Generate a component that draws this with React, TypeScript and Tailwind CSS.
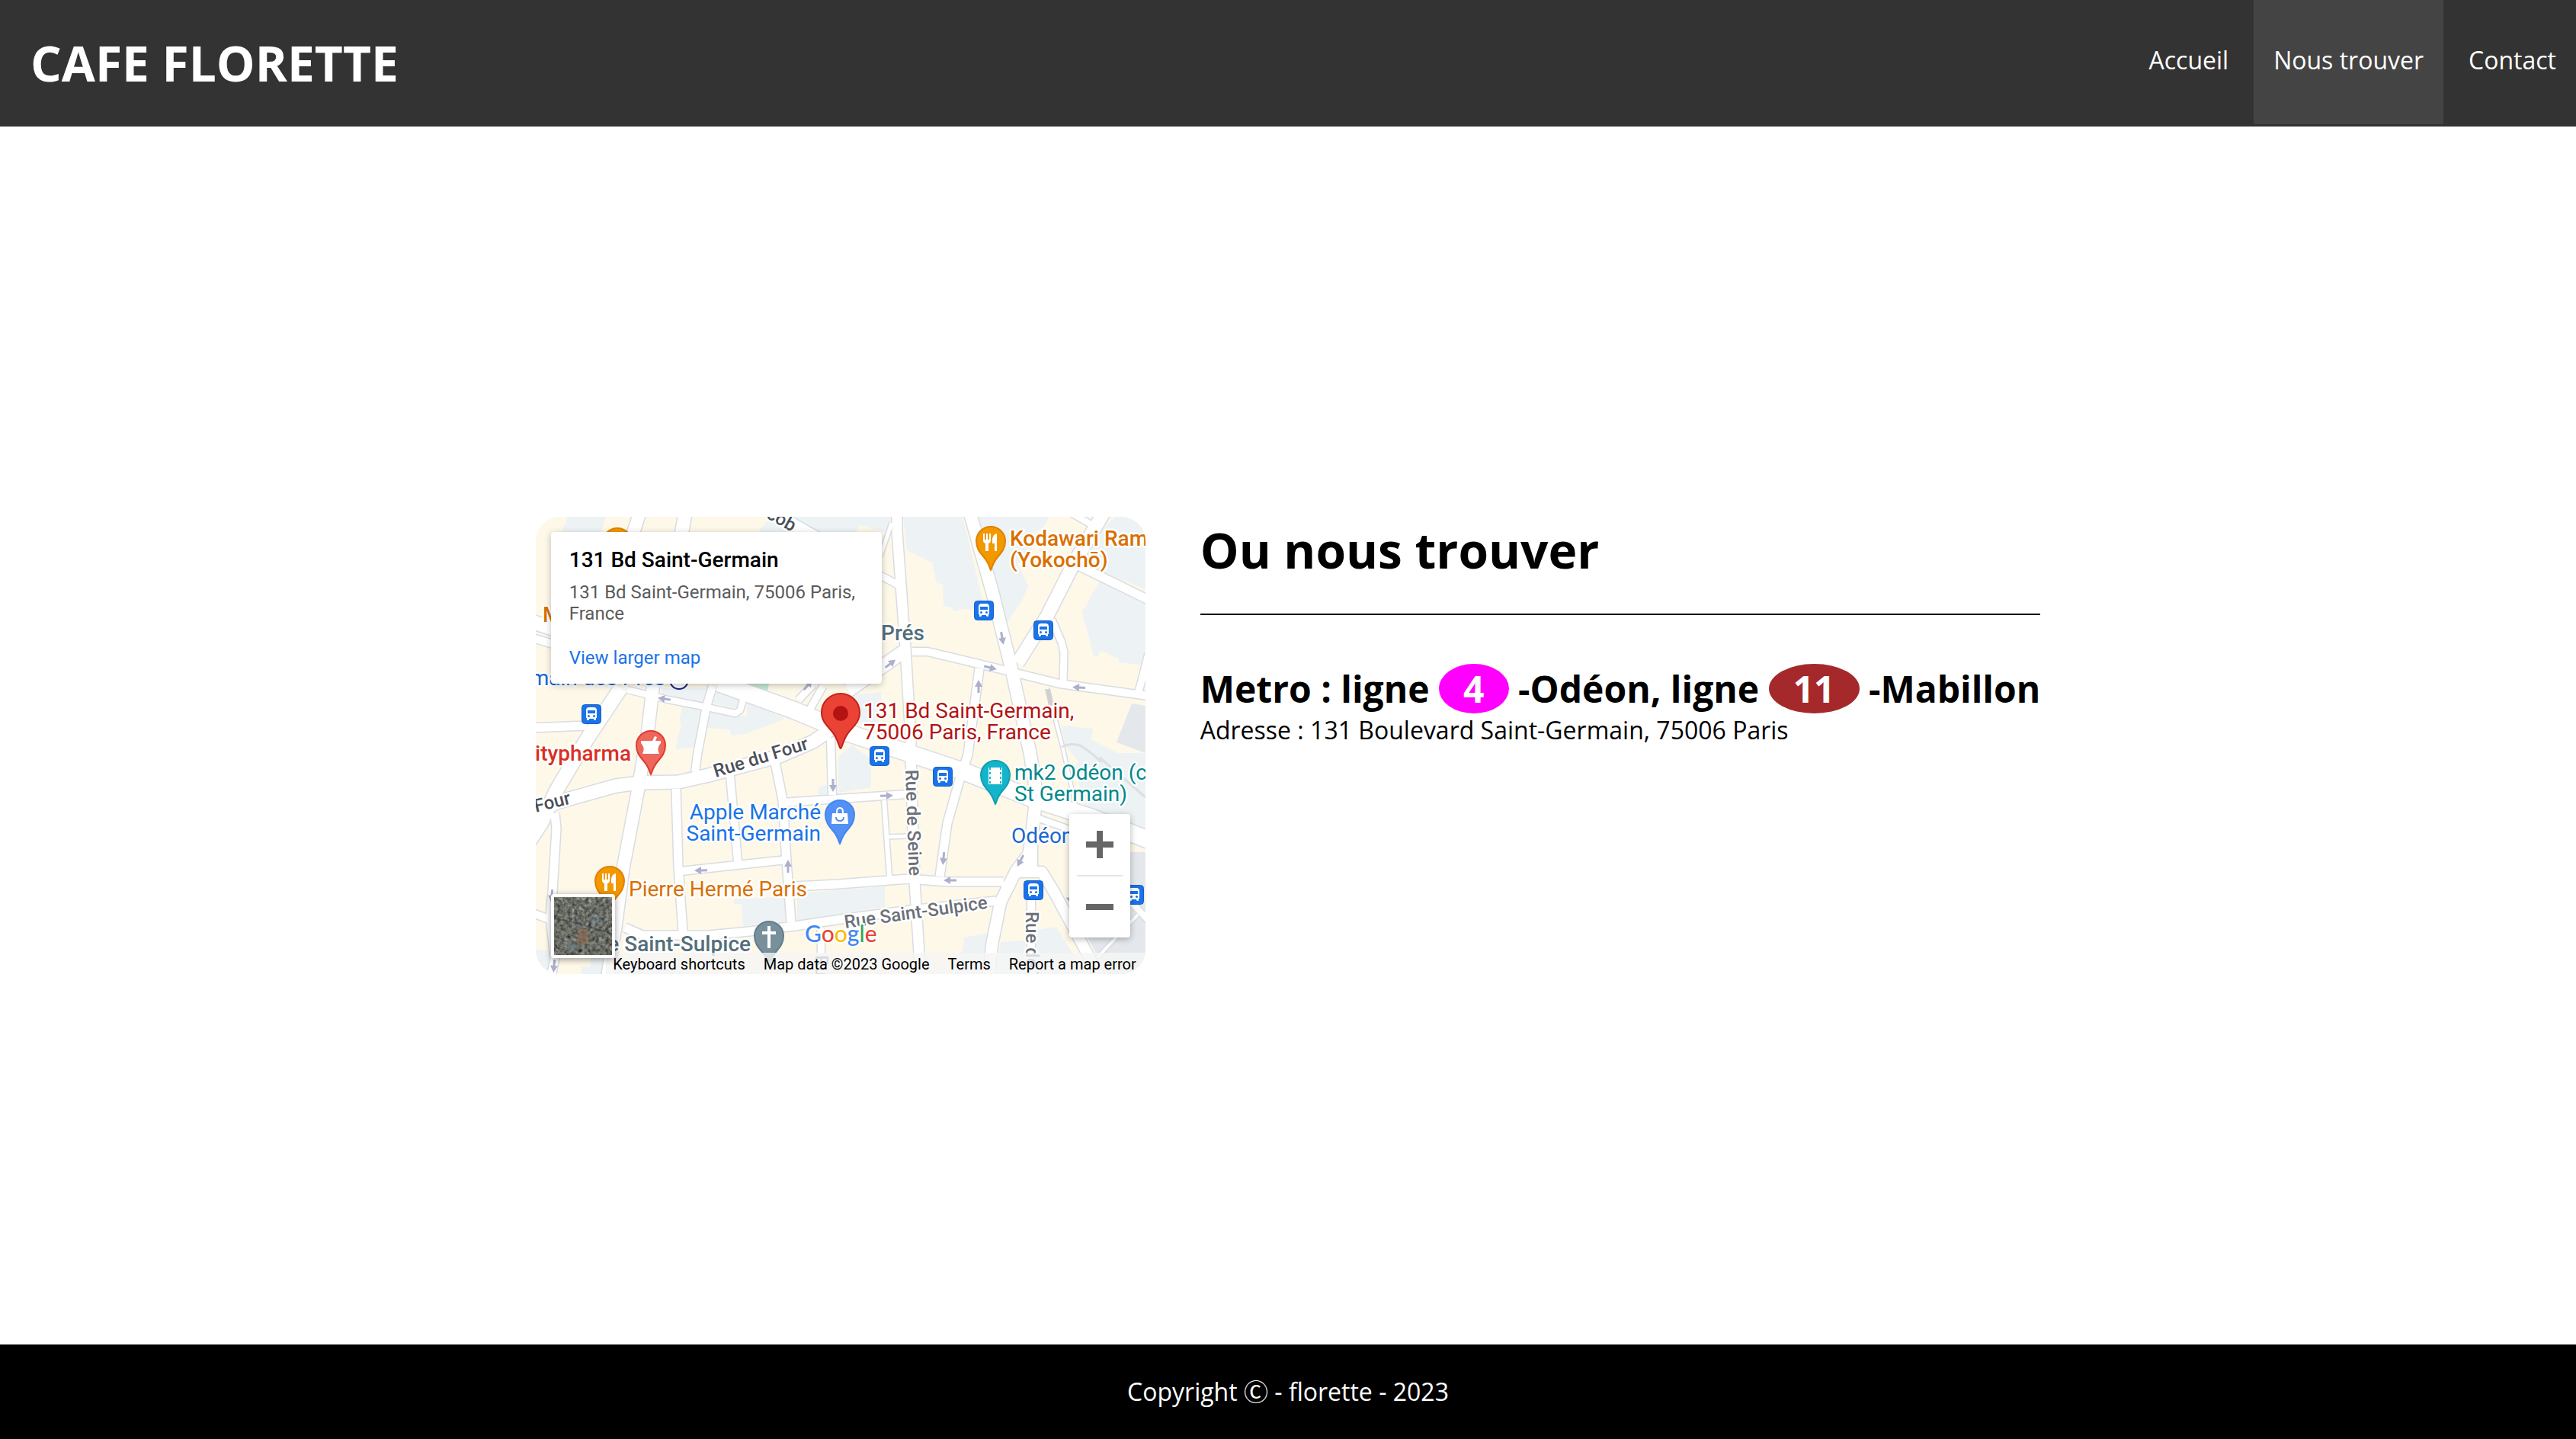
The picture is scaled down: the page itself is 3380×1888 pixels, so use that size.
import React from "react";

type Road = [string, number];

const ROADS: Road[] = [
  ["136,-4 127,24 154,222 147,282 134,359 115,459 104,542 94,604", 16],
  ["196,-4 188,40", 17],
  ["300,-12 354,20 430,60", 16],
  ["112,224 67,292 27,359 7,402 -8,425", 18],
  ["-4,277 67,274", 11],
  ["-4,138 26,148", 18],
  ["-4,159 26,168", 10],
  ["120,227 174,240 220,249 262,258 268,254 272,240", 8],
  ["232,222 224,249 212,312 209,335", 10],
  ["345,240 364,220", 9],
  ["360,252 377,222", 9],
  ["-4,390 30,374 105,353 137,349 187,348 227,339 320,314 364,295 392,276", 17],
  ["25,389 27,409 22,492 19,525 25,579 20,604", 11],
  ["-4,520 20,529", 10],
  ["184,357 187,459 193,545", 11],
  ["255,339 265,452", 10],
  ["314,322 324,372 329,452 335,532", 11],
  ["190,465 264,457 329,450", 10],
  ["324,375 397,370 487,364", 10],
  ["340,485 397,482 490,475 540,479 614,479", 11],
  ["117,539 140,549 227,549 280,544 340,537 407,527 500,515 604,504", 11],
  ["387,290 389,365", 10],
  ["474,-4 474,19 485,172 492,292 492,319 497,479 505,604", 13],
  ["467,8 452,52", 5],
  ["450,76 475,89", 9],
  ["570,-4 600,102 624,199 649,312 657,365 650,425 650,466", 16],
  ["747,-8 707,59 670,132 632,192", 17],
  ["494,177 514,177 610,200 687,219 804,235", 10],
  ["410,228 485,175", 17],
  ["582,199 567,312 557,342 540,402 530,472", 11],
  ["677,135 690,165 693,178 692,216", 9],
  ["704,-4 732,12", 8],
  ["714,65 804,109", 11],
  ["804,180 791,230", 9],
  ["457,372 464,472", 6],
  ["460,420 487,419", 5],
  ["654,398 647,442 630,465 610,505 599,559 594,604", 15],
  ["634,466 664,466 680,492 730,585 740,604", 14],
  ["655,394 700,410 740,424", 8],
  ["650,490 650,604", 10],
  ["776,500 804,530", 8],
  ["790,522 737,578", 4],
  ["374,540 375,604", 9],
  ["671,225 692,305 708,378", 4],
];

const BOULEVARD: Road[] = [["240,218 339,254 414,285 564,335 650,369 730,395 804,424", 22]];

const BLOCKS = [
  "42,0 92,0 85,20 34,20",
  "292,20 309,0 470,0 466,22 425,11 420,20",
  "482,0 560,0 587,112 579,122 557,121 554,124 547,123 546,119 535,117 534,89 526,87 524,79 520,60 487,44",
  "580,0 674,0 666,14 655,20 650,46 632,62 646,90 640,106 617,142 607,115",
  "740,84 800,112 800,195 766,191 764,186 740,175 738,184 732,182 717,125",
  "760,0 800,0 800,95 717,63 735,25",
  "165,225 227,225 220,247 165,236",
  "234,229 267,239 264,252 230,244",
  "192,249 220,252 210,302 184,305 186,290 191,275 189,265",
  "230,255 277,262 277,242 327,265 274,285 257,287 254,279 225,277",
  "400,235 454,230 450,272 410,270",
  "397,315 415,300 440,318 440,355 397,362",
  "343,494 458,485 458,512 343,530",
  "260,502 330,498 333,530 272,537 270,508 260,508",
  "562,552 595,546 588,600 550,600 552,590 561,564",
  "610,558 642,556 642,600 604,600",
  "657,542 683,538 720,600 657,600",
  "690,274 732,278 728,292 764,310 800,310 800,410 720,380 708,330 712,320 694,300",
  "0,568 20,570 22,600 0,600",
  "72,570 92,552 92,600 72,600",
  "370,355 388,350 386,366 372,368",
  "60,590 200,590 200,600 60,600",
];

const DARK_BLOCKS = ["782,245 800,248 800,310 762,296", "700,508 780,440 800,440 800,600 750,600"];

const ARROWS: [number, number, number][] = [
  [169, 239, 188], [357, 221, -50], [465, 193, -38], [612, 159, 80], [596, 198, 14],
  [581, 223, -90], [713, 224, 183], [390, 352, 90], [217, 464, 178], [331, 459, -90],
  [21, 497, 95], [24, 589, 95], [460, 366, -2], [535, 448, 95], [544, 477, 180],
  [636, 451, 118], [704, 503, 200],
];

const STOPS: [number, number][] = [
  [60, 246], [575, 110], [653, 136], [438, 301], [521, 328], [640, 477], [772, 483],
];

function Pin({ x, y, fill, stroke, children }: { x: number; y: number; fill: string; stroke: string; children?: React.ReactNode }) {
  return (
    <g transform={`translate(${x} ${y})`}>
      <path
        d="M0 38C-1 37-2 29-9 21C-15 14-19 9-19 0A19 19 0 1 1 19 0C19 9 15 14 9 21C2 29 1 37 0 38Z"
        fill={fill}
        stroke={stroke}
        strokeWidth={2}
      />
      {children}
    </g>
  );
}

function Cutlery() {
  return (
    <g fill="#fff">
      <path d="M-10-10h2v8h2v-8h2v8h2v-8h2v9q0 3-3 4v10h-4V3q-3-1-3-4z" />
      <path d="M8-10v23H5V3H2V-3Q3-9 8-10z" />
    </g>
  );
}

function BusStop({ x, y }: { x: number; y: number }) {
  return (
    <g transform={`translate(${x} ${y})`}>
      <rect x="0.5" y="0.5" width="25" height="25" rx="4" fill="#1a73e8" stroke="#1560cc" />
      <path d="M6 8q0-4 4-4h6q4 0 4 4v10h-1v2q0 1-1 1t-2-1v-1H10v1q0 1-2 1t-1-1v-2H6z" fill="#fff" />
      <rect x="8" y="8" width="10" height="4" fill="#1a73e8" />
      <circle cx="9.500" cy="15.500" r="1.500" fill="#1a73e8" />
      <circle cx="16.500" cy="15.500" r="1.500" fill="#1a73e8" />
    </g>
  );
}

function MapDrawing() {
  const all: Road[] = [...ROADS, ...BOULEVARD];
  return (
    <svg viewBox="0 0 800 600" className="absolute inset-0 size-full font-['Roboto',sans-serif]" role="img" aria-label="Plan du quartier Saint-Germain">
      <rect width="800" height="600" fill="#fef8e8" />
      {BLOCKS.map((p) => <polygon key={p} points={p} fill="#edf2f4" />)}
      {DARK_BLOCKS.map((p) => <polygon key={p} points={p} fill="#e4e8ec" />)}
      <polygon points="277,218 306,218 304,230" fill="#c5e8cf" />
      <g fill="none" strokeLinejoin="round">
        {all.map(([p, w]) => <polyline key={p} points={p} stroke="#d9dce2" strokeWidth={w + 3} />)}
        {all.map(([p, w]) => <polyline key={p} points={p} stroke="#fff" strokeWidth={w} />)}
      </g>
      <path d="M690 302q12-6 24-2q14 8 28 22M740 316l60 52" fill="none" stroke="#dcdfe4" strokeWidth="3" />
      <path d="M672 226l4 22" stroke="#d0d0d0" strokeWidth="6" />
      {ARROWS.map(([x, y, a]) => (
        <path key={`${x}-${y}`} d="M-8-1.500H0V-5L9 0L0 5V1.500H-8z" fill="#acb0cd" transform={`translate(${x} ${y}) rotate(${a})`} />
      ))}

      <g stroke="#fff" strokeWidth="5" strokeLinejoin="round" paintOrder="stroke" fontSize="28">
        <g fontSize="24" fontWeight="500" fill="#4b5058">
          <text transform="translate(336 20) rotate(29)" textAnchor="end">cob</text>
          <text transform="translate(236 342) rotate(-17)">Rue du Four</text>
          <text transform="translate(0 388) rotate(-14)">Four</text>
        </g>
        <g fontSize="24" fontWeight="500" fill="#6c7078">
          <text transform="translate(485 332) rotate(88)">Rue de Seine</text>
          <text transform="translate(406 540) rotate(-8)">Rue Saint-Sulpice</text>
          <text transform="translate(643 518) rotate(90)">Rue de T</text>
          <text transform="translate(367 575) rotate(90)">Ru</text>
        </g>
        <text x="9" y="138" fontWeight="500" fill="#d96f00">M</text>
        <g fontWeight="500" fill="#d96f00">
          <text x="622" y="38">Kodawari Ram</text>
          <text x="622" y="66">(Yokochō)</text>
        </g>
        <text x="122" y="498" fill="#d96f00">Pierre Hermé Paris</text>
        <g fill="#b31412">
          <text x="430" y="264">131 Bd Saint-Germain,</text>
          <text x="430" y="292">75006 Paris, France</text>
        </g>
        <text x="125" y="320" textAnchor="end" fontWeight="500" fill="#d93025">itypharma</text>
        <text x="170" y="221" textAnchor="end" fill="#1967d2">main des Prés</text>
        <text x="624" y="428" fill="#1967d2">Odéon</text>
        <g fill="#1a73e8" textAnchor="end">
          <text x="374" y="397">Apple Marché</text>
          <text x="374" y="425">Saint-Germain</text>
        </g>
        <g fill="#00898c">
          <text x="628" y="345">mk2 Odéon (c</text>
          <text x="628" y="373">St Germain)</text>
        </g>
        <g fontWeight="500" fill="#546e7a">
          <text x="510" y="162" textAnchor="end">Prés</text>
          <text x="282" y="570" textAnchor="end">e Saint-Sulpice</text>
        </g>
      </g>

      <circle cx="188" cy="214" r="12" fill="#fff" stroke="#1a237e" strokeWidth="2" />
      {STOPS.map(([x, y]) => <BusStop key={`${x}-${y}`} x={x} y={y} />)}

      <Pin x={107} y={34} fill="#f29900" stroke="#e28000" />
      <Pin x={597} y={32} fill="#f29900" stroke="#e28000"><Cutlery /></Pin>
      <Pin x={97} y={478} fill="#f29900" stroke="#e28000"><Cutlery /></Pin>
      <Pin x={151} y={300} fill="#ee675c" stroke="#e03a30">
        <path d="M-13-6H2l3-6 3 1-2 5h7v3q-6 6-2 14H-11Q-7 3-13-3z" fill="#fff" />
      </Pin>
      <Pin x={399} y={391} fill="#5491f5" stroke="#4285f4">
        <path d="M-10-2H10L11 12H-11z" fill="#fff" />
        <path d="M-4-1v-3q0-5 4-5t4 5v3" fill="none" stroke="#fff" strokeWidth="2" />
        <path d="M-5 3q0 5 5 5t5-5" fill="none" stroke="#5491f5" strokeWidth="2" />
      </Pin>
      <Pin x={603} y={339} fill="#12b5cb" stroke="#129eaf">
        <path d="M-9-10H9V12H-9z" fill="#fff" />
        <path d="M-7-10V12M7-10V12" stroke="#12b5cb" strokeWidth="2" strokeDasharray="3 3" />
      </Pin>
      <Pin x={306} y={550} fill="#78909c" stroke="#607d8b">
        <path d="M-2-13H2V-6H9V-2H2V16H-2V-2H-9V-6H-2z" fill="#fff" />
      </Pin>
      <path
        d="M400 304C398 304 397 291 388 281C380 272 375 267 375 257A25 25 0 1 1 425 257C425 267 420 272 412 281C403 291 402 304 400 304Z"
        fill="#ea4335"
        stroke="#c5221f"
        strokeWidth="2"
      />
      <circle cx="400" cy="258" r="10" fill="#b31412" />

      <text x="353" y="558" fontSize="30" className="font-['Lato',sans-serif]" fontWeight="500" stroke="#fff" strokeWidth="4" paintOrder="stroke">
        <tspan fill="#4285f4">G</tspan>
        <tspan fill="#ea4335">o</tspan>
        <tspan fill="#fbbc04">o</tspan>
        <tspan fill="#4285f4">g</tspan>
        <tspan fill="#34a853">l</tspan>
        <tspan fill="#ea4335">e</tspan>
      </text>
    </svg>
  );
}

function SatelliteThumb() {
  return (
    <svg viewBox="0 0 76 76" className="size-full">
      <filter id="grain" x="0" y="0" width="100%" height="100%" colorInterpolationFilters="sRGB">
        <feTurbulence type="fractalNoise" baseFrequency="0.22" numOctaves="4" seed="7" />
        <feColorMatrix values="0.500 0.400 0 0 -0.040  0.500 0.400 0 0 -0.030  0.500 0.400 0 0 -0.060  0 0 0 0 1" />
      </filter>
      <rect width="76" height="76" fill="#62635c" />
      <rect width="76" height="76" filter="url(#grain)" />
      <path d="M22 32l10-2 4 8-10 4zM48 26l14-2 2 12-16 2zM16 58l10-2 6 12-12 6z" fill="#6b7a86" opacity="0.400" />
      <path d="M31 42h14v20H31z" fill="#95694f" opacity="0.500" />
      <path d="M0 28l30 6 46 14" stroke="#2b302d" strokeWidth="2" fill="none" opacity="0.400" />
    </svg>
  );
}

function MapFrame() {
  return (
    <section aria-label="Carte" className="relative h-[600px] w-[800px] shrink-0 overflow-hidden rounded-[32px] font-['Roboto',sans-serif]">
      <MapDrawing />
      <div className="absolute top-5 left-5 h-[199px] w-[434px] rounded-sm bg-white px-6 pt-[17px] shadow-[0_2px_8px_rgba(0,0,0,0.25)]">
        <h2 className="text-[28px] leading-[40px] font-medium text-black">131 Bd Saint-Germain</h2>
        <p className="mt-2 text-[24px] leading-[28px] text-[#5b5b5b]">131 Bd Saint-Germain, 75006 Paris, France</p>
        <a href="#carte" className="mt-[30px] block text-[24px] leading-[28px] text-[#1a73e8]">View larger map</a>
      </div>
      <div className="absolute right-5 bottom-12 flex w-20 flex-col items-center rounded-sm bg-white shadow-[0_2px_8px_rgba(0,0,0,0.3)]">
        <button type="button" aria-label="Zoom in" className="flex h-20 w-full items-center justify-center">
          <svg viewBox="0 0 36 36" className="size-9" fill="#666"><path d="M14 0h8v14h14v8H22v14h-8V22H0v-8h14z" /></svg>
        </button>
        <div className="h-[2px] w-[60px] bg-[#e6e6e6]" />
        <button type="button" aria-label="Zoom out" className="flex h-20 w-full items-center justify-center">
          <svg viewBox="0 0 36 36" className="size-9" fill="#666"><path d="M0 14h36v8H0z" /></svg>
        </button>
      </div>
      <div className="absolute right-0 bottom-0 flex h-7 w-[708px] items-center justify-end gap-6 bg-[#f5f5f5]/80 pt-[2px] pr-3 text-[20px] leading-[28px] whitespace-nowrap text-black">
        <button type="button">Keyboard shortcuts</button>
        <span>Map data ©2023 Google</span>
        <a href="#terms">Terms</a>
        <a href="#report">Report a map error</a>
      </div>
      <button type="button" aria-label="Show satellite imagery" className="absolute bottom-[21px] left-5 size-[84px] rounded-sm border-4 border-white bg-white shadow-[0_2px_8px_rgba(0,0,0,0.4)]">
        <SatelliteThumb />
      </button>
    </section>
  );
}

const NAV = [
  { label: "Accueil", active: false },
  { label: "Nous trouver", active: true },
  { label: "Contact", active: false },
];

export default function App() {
  return (
    <div className="flex min-h-screen flex-col bg-white font-['Open_Sans',sans-serif] text-[32px] leading-[44px] text-black">
      <header className="flex items-start justify-between bg-[#333] text-white">
        <div className="px-10 pt-[39px] pb-10 text-[64px] leading-[87px] font-bold">CAFE FLORETTE</div>
        <nav className="flex gap-[7px]">
          {NAV.map(({ label, active }) => (
            <a
              key={label}
              href="#"
              aria-current={active ? "page" : undefined}
              className={active ? "bg-[#444] px-[26px] pt-[57px] pb-[62px]" : "px-[26px] pt-[57px] pb-[62px]"}
            >
              {label}
            </a>
          ))}
        </nav>
      </header>

      <main className="flex flex-1 items-center justify-center pt-[26px]">
        <div className="flex items-start gap-[72px]">
          <MapFrame />
          <section>
            <h1 className="text-[64px] leading-[87px] font-bold">Ou nous trouver</h1>
            <hr className="mt-10 mb-16 border-t-2 border-black" />
            <h2 className="text-[48px] leading-[65px] font-bold whitespace-nowrap">
              Metro : ligne{" "}
              <span className="inline-block rounded-[50%] bg-[#ff00ff] px-8 text-white">4</span> -Odéon, ligne{" "}
              <span className="inline-block rounded-[50%] bg-[#a5292a] px-8 text-white">11</span> -Mabillon
            </h2>
            <p>Adresse : 131 Boulevard Saint-Germain, 75006 Paris</p>
          </section>
        </div>
      </main>

      <footer className="bg-black py-10 text-center text-white">
        Copyright <span className="font-['Noto_Sans_CJK_JP',sans-serif] leading-none">Ⓒ</span> - florette - 2023
      </footer>
    </div>
  );
}
